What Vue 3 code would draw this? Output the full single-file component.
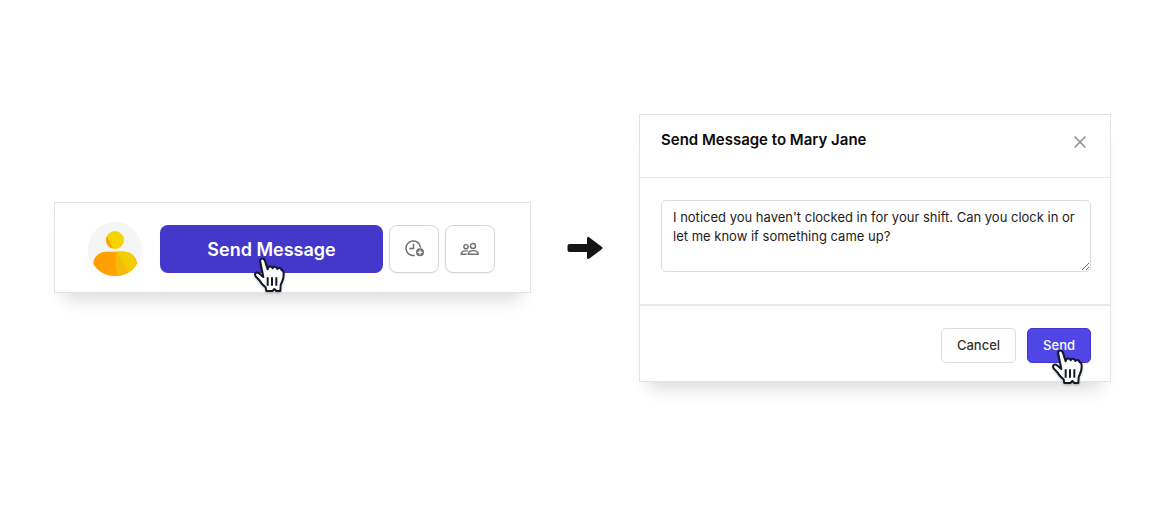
<template>
  <main class="flow">
    <!-- Employee actions -->
    <section class="card actions">
      <svg class="avatar" viewBox="0 0 54 54" role="img" aria-label="Employee">
        <circle cx="27" cy="27" r="27" fill="#f5f5f5" />
        <circle cx="27" cy="18" r="9" fill="#f5d400" />
        <path d="M19 14a9 9 0 0 0 6 12.800Z" fill="#ffa000" />
        <path d="M5.300 42C5.300 35 11 29.700 18 29.700h18c7 0 12.700 5.300 12.700 12.300C44 50 36 54 27 54S10 50 5.300 42Z" fill="#ffa000" />
        <path d="M28 29.700h8c7 0 12.700 5.300 12.700 12.300C44.500 49.500 37 53.700 29.500 54c-2-8-2.500-16-1.500-24.300Z" fill="#f5bb0c" />
        <path d="M28.200 29.700H36c7 0 12.700 5.300 12.700 12.300-2 3.500-4.700 6.200-8 8.200Z" fill="#f3cd00" />
      </svg>
      <button class="send-message" type="button" @click="openMessage">Send Message</button>
      <button class="icon-button" type="button" aria-label="Add time">
        <svg width="20" height="18" viewBox="0 0 20 18" fill="none" stroke="#707070" stroke-width="1.500">
          <path d="M16.600 7.600A7.300 7.300 0 1 0 10.800 15.400" />
          <path d="M9.500 3.800v4.700H5.200" />
          <circle cx="16" cy="12.300" r="4" fill="#707070" stroke="none" />
          <path d="M16 9.900v4.800M13.600 12.300h4.800" stroke="#fff" stroke-width="1.200" />
        </svg>
      </button>
      <button class="icon-button" type="button" aria-label="Team">
        <svg width="20" height="14" viewBox="0 0 20 14" fill="none" stroke="#707070" stroke-width="1.400">
          <circle cx="6" cy="4.700" r="2.100" />
          <circle cx="13" cy="4" r="2.500" />
          <path d="M8.300 12.300c0-2.500 1.800-3.700 4.900-3.700s4.900 1.200 4.900 3.700Z" />
          <path d="M6.700 12.300H1.200c0-2.300 1.700-3.400 4.500-3.400.8 0 1.500.1 2.100.3" />
        </svg>
      </button>
      <svg class="pointer pointer-open" viewBox="0 0 102 114" aria-hidden="true">
        <path :d="handPath" />
        <path class="fingers" d="M47 64v25M60 64v25M73 64v25" />
      </svg>
    </section>

    <svg class="arrow" viewBox="0 0 36 24" aria-hidden="true">
      <path d="M3 8h17V2.500c0-1.500 1.200-2 2.400-1.100L35 11c.8.600.8 1.400 0 2L22.400 22.600c-1.200.9-2.400.4-2.400-1.100V16H3c-1.600 0-2.500-.9-2.500-2.300v-3.400C.5 8.900 1.400 8 3 8Z" fill="#161616" />
    </svg>

    <!-- Message dialog -->
    <form class="card dialog" @submit.prevent>
      <header class="dialog-header">
        <h2><label for="message">Send Message to {{ employee }}</label></h2>
        <button class="close" type="button" aria-label="Close">
          <svg width="12" height="12" viewBox="0 0 12 12" stroke="#8c8c8c" stroke-width="1.500">
            <path d="M.5.5l11 11M11.500.5l-11 11" />
          </svg>
        </button>
      </header>
      <div class="dialog-body">
        <textarea id="message" ref="messageBox" v-model="message"></textarea>
      </div>
      <footer class="dialog-footer">
        <button class="cancel" type="button">Cancel</button>
        <button class="send" type="submit">Send</button>
      </footer>
      <svg class="pointer pointer-send" viewBox="0 0 102 114" aria-hidden="true">
        <path :d="handPath" />
        <path class="fingers" d="M47 64v25M60 64v25M73 64v25" />
      </svg>
    </form>
  </main>
</template>

<script setup>
import { ref } from 'vue'

const employee = ref('Mary Jane')
const message = ref("I noticed you haven't clocked in for your shift. Can you clock in or let me know if something came up?")
const messageBox = ref(null)

// Outline of the pointing hand, used by both pointers
const handPath = 'M25 18C22 5 36 5 39 15L47 40C48 30 59 29 62 37C64 30 74 31 76 39C79 33 87 36 89 43C94 43 95 48 95 56C95 72 90 76 86 87L85 105H73L67 99L61 105H43L41 94C33 87 27 82 24 75L11 61C6 53 13 46 21 52L34 63Z'

function openMessage() {
  messageBox.value.focus()
}
</script>

<style>
body {
  margin: 0;
  background: #fff;
}
</style>

<style scoped>
.flow {
  box-sizing: border-box;
  min-height: 100vh;
  padding: 0 43px 23px 54px;
  display: grid;
  grid-template-columns: 477fr 36px 472fr;
  column-gap: 36px;
  align-items: center;
  font-family: Inter, "Liberation Sans", sans-serif;
}

button {
  font-family: inherit;
  cursor: pointer;
}

.card {
  position: relative;
  box-sizing: border-box;
  min-width: 0;
  background: #fff;
  border: 1px solid #e3e3e3;
  box-shadow: 0 16px 16px -10px rgba(0, 0, 0, 0.15);
}

.actions {
  display: flex;
  align-items: center;
  padding: 19px 35px 16px 33px;
}

.avatar {
  width: 54px;
  height: 54px;
  flex: none;
  margin-right: 18px;
}

.send-message {
  flex: 1;
  height: 48px;
  padding: 0;
  border: none;
  border-radius: 8px;
  background: #4338ca;
  color: #fff;
  font-size: 18px;
  font-weight: 600;
}

.icon-button {
  display: flex;
  align-items: center;
  justify-content: center;
  width: 50px;
  height: 48px;
  flex: none;
  margin-left: 6px;
  padding: 0;
  border: 1px solid #d6d6d6;
  border-radius: 8px;
  background: #fff;
  box-shadow: 0 1px 2px rgba(0, 0, 0, 0.05);
}

.arrow {
  width: 36px;
  height: 24px;
}

.dialog-header {
  display: flex;
  justify-content: space-between;
  align-items: flex-start;
  min-height: 28px;
  padding: 16px 24px 18px 21px;
  border-bottom: 1px solid #ebebeb;
}

.dialog-header h2 {
  margin: 0;
  color: #0a0a0a;
  font-size: 15px;
  line-height: 18px;
  font-weight: 600;
}

.close {
  display: flex;
  margin-top: 5px;
  padding: 0;
  border: none;
  background: none;
}

.dialog-body {
  padding: 22px 19px 32px 21px;
  border-bottom: 2px solid #e9e9e9;
}

textarea {
  display: block;
  box-sizing: border-box;
  width: 100%;
  height: 72px;
  padding: 7px 11px;
  border: 1px solid #dedede;
  border-radius: 5px;
  outline: none;
  color: #1c1c1c;
  font-family: inherit;
  font-size: 13px;
  line-height: 19px;
}

.dialog-footer {
  display: flex;
  justify-content: flex-end;
  gap: 11px;
  padding: 22px 19px 18px;
}

.dialog-footer button {
  box-sizing: border-box;
  height: 35px;
  padding: 0 15px;
  border: 1px solid #dedede;
  border-radius: 5px;
  background: #fff;
  color: #333;
  font-size: 13px;
  line-height: 16px;
  font-weight: 500;
}

.dialog-footer .send {
  border-color: #4338ca;
  background: #4f46e5;
  color: #fff;
}

.pointer {
  position: absolute;
  width: 34px;
  height: 38px;
  fill: #fff;
  stroke: #111827;
  stroke-width: 6;
  stroke-linejoin: round;
  pointer-events: none;
  filter: drop-shadow(0 1px 1px rgba(0, 0, 0, 0.25));
}

.pointer .fingers {
  fill: none;
}

.pointer-open {
  top: 53px;
  left: 197px;
}

.pointer-send {
  right: 26px;
  bottom: -5px;
}
</style>
